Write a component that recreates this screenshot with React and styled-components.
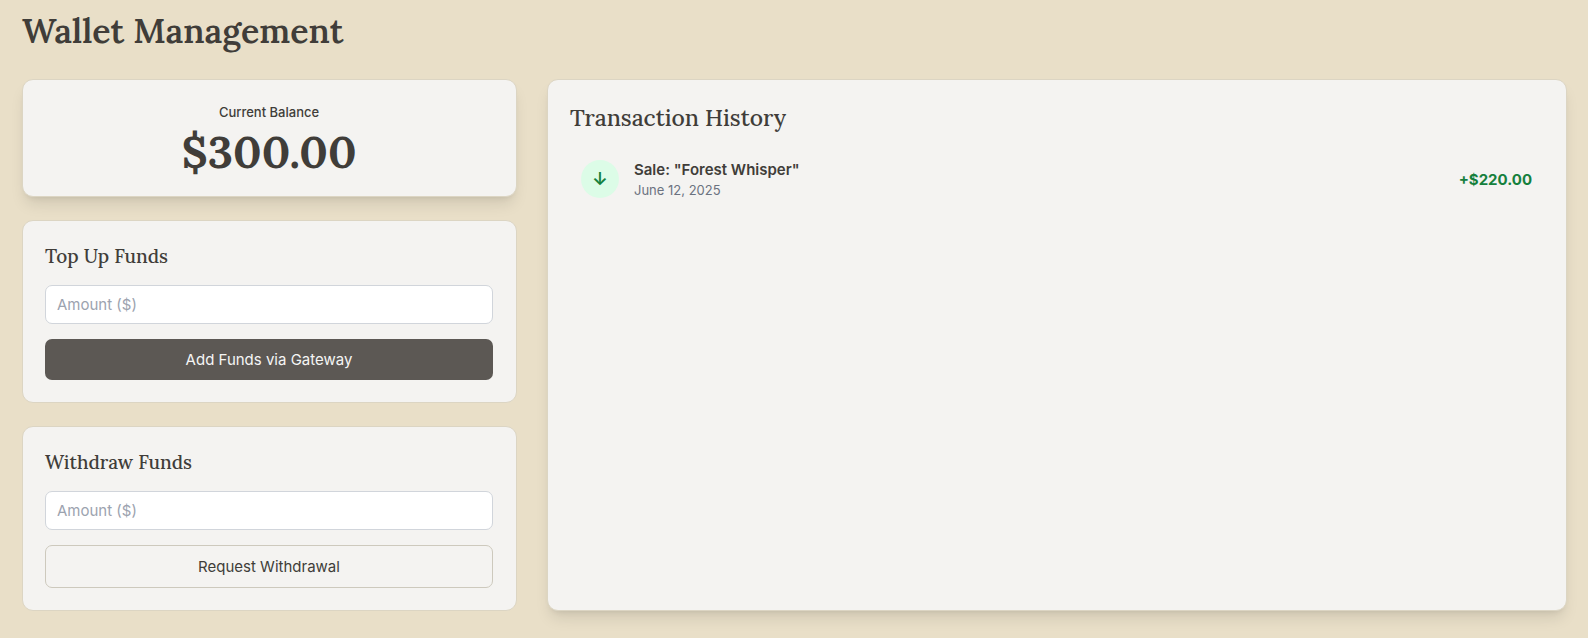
import React from "react";
import styled, { createGlobalStyle, css } from "styled-components";

const ink = "#403d39";
const serif = '"Lora", "Liberation Serif", serif';
const sans = '"Inter", "Liberation Sans", sans-serif';

const GlobalStyle = createGlobalStyle`
  *, *::before, *::after { box-sizing: border-box; }
  body {
    margin: 0;
    background: #e9dfc8;
    color: ${ink};
    font-family: ${sans};
    font-size: 15px;
    line-height: 23px;
  }
  h1, h2, h3, p, ul { margin: 0; padding: 0; }
`;

const Page = styled.main`
  padding: 12px 21px 24px 22px;
`;

const PageTitle = styled.h1`
  margin-bottom: 29px;
  font: 600 34px/38px ${serif};
`;

const Columns = styled.div`
  display: grid;
  grid-template-columns: repeat(3, minmax(0, 1fr));
  gap: 30px;
`;

const SideColumn = styled.div`
  display: flex;
  flex-direction: column;
  gap: 23px;
`;

const Card = styled.section`
  padding: 22px 23px 22px 22px;
  background: #f4f3f1;
  border: 1px solid #dcd5c3;
  border-radius: 11px;
  ${(p) =>
    p.$raised &&
    css`
      box-shadow: 0 10px 15px -3px rgba(0, 0, 0, 0.1),
        0 4px 6px -4px rgba(0, 0, 0, 0.1);
    `}
`;

const BalanceCard = styled(Card)`
  text-align: center;
`;

const HistoryCard = styled(Card)`
  grid-column: span 2;
`;

const BalanceLabel = styled.p`
  margin-bottom: 8px;
  font-size: 13px;
  font-weight: 500;
  line-height: 20px;
`;

const BalanceAmount = styled.p`
  font: 700 45px/44px ${serif};
`;

const FormTitle = styled.h3`
  margin-bottom: 15px;
  font: 500 19px/27px ${serif};
`;

const HistoryTitle = styled.h2`
  margin-bottom: 15px;
  font: 500 23px/32px ${serif};
`;

const Form = styled.form`
  display: flex;
  flex-direction: column;
  gap: 15px;
`;

const AmountInput = styled.input`
  width: 100%;
  padding: 7px 11px;
  font: 400 15px/23px ${sans};
  color: ${ink};
  background: #fff;
  border: 1px solid #d1d5db;
  border-radius: 7px;
  &::placeholder { color: #9ca3af; opacity: 1; }
`;

const Button = styled.button`
  width: 100%;
  padding: 9px 15px;
  font: 400 15px/23px ${sans};
  color: #f5f5f4;
  background: #5c5854;
  border: 0;
  border-radius: 7px;
  cursor: pointer;
`;

const OutlineButton = styled(Button)`
  color: ${ink};
  background: transparent;
  border: 1px solid #cdc9bd;
`;

const TransactionList = styled.ul`
  list-style: none;
`;

const Transaction = styled.li`
  display: flex;
  align-items: center;
  gap: 15px;
  padding: 9px 11px;
`;

const DirectionBadge = styled.span`
  display: flex;
  align-items: center;
  justify-content: center;
  width: 38px;
  height: 38px;
  border-radius: 50%;
  background: #dcfce7;
  color: #15803d;
  font-size: 18px;
  font-weight: 600;
`;

const Details = styled.div`
  flex: 1;
`;

const Description = styled.p`
  font-weight: 600;
  line-height: 23px;
`;

const DateText = styled.p`
  font-size: 13px;
  line-height: 19px;
  color: #6b7280;
`;

const Credit = styled.p`
  font-weight: 700;
  color: #15803d;
`;

const transactions = [
  { title: 'Sale: "Forest Whisper"', date: "June 12, 2025", amount: "+$220.00" },
];

export default function App() {
  const stop = (e) => e.preventDefault();
  return (
    <>
      <GlobalStyle />
      <Page>
        <PageTitle>Wallet Management</PageTitle>
        <Columns>
          <SideColumn>
            <BalanceCard $raised>
              <BalanceLabel>Current Balance</BalanceLabel>
              <BalanceAmount>$300.00</BalanceAmount>
            </BalanceCard>
            <Card>
              <FormTitle id="top-up">Top Up Funds</FormTitle>
              <Form onSubmit={stop}>
                <AmountInput inputMode="decimal" placeholder="Amount ($)" aria-labelledby="top-up" />
                <Button type="submit">Add Funds via Gateway</Button>
              </Form>
            </Card>
            <Card>
              <FormTitle id="withdraw">Withdraw Funds</FormTitle>
              <Form onSubmit={stop}>
                <AmountInput inputMode="decimal" placeholder="Amount ($)" aria-labelledby="withdraw" />
                <OutlineButton type="submit">Request Withdrawal</OutlineButton>
              </Form>
            </Card>
          </SideColumn>
          <HistoryCard $raised>
            <HistoryTitle>Transaction History</HistoryTitle>
            <TransactionList>
              {transactions.map((t) => (
                <Transaction key={t.title}>
                  <DirectionBadge aria-hidden="true">↓</DirectionBadge>
                  <Details>
                    <Description>{t.title}</Description>
                    <DateText>{t.date}</DateText>
                  </Details>
                  <Credit>{t.amount}</Credit>
                </Transaction>
              ))}
            </TransactionList>
          </HistoryCard>
        </Columns>
      </Page>
    </>
  );
}
